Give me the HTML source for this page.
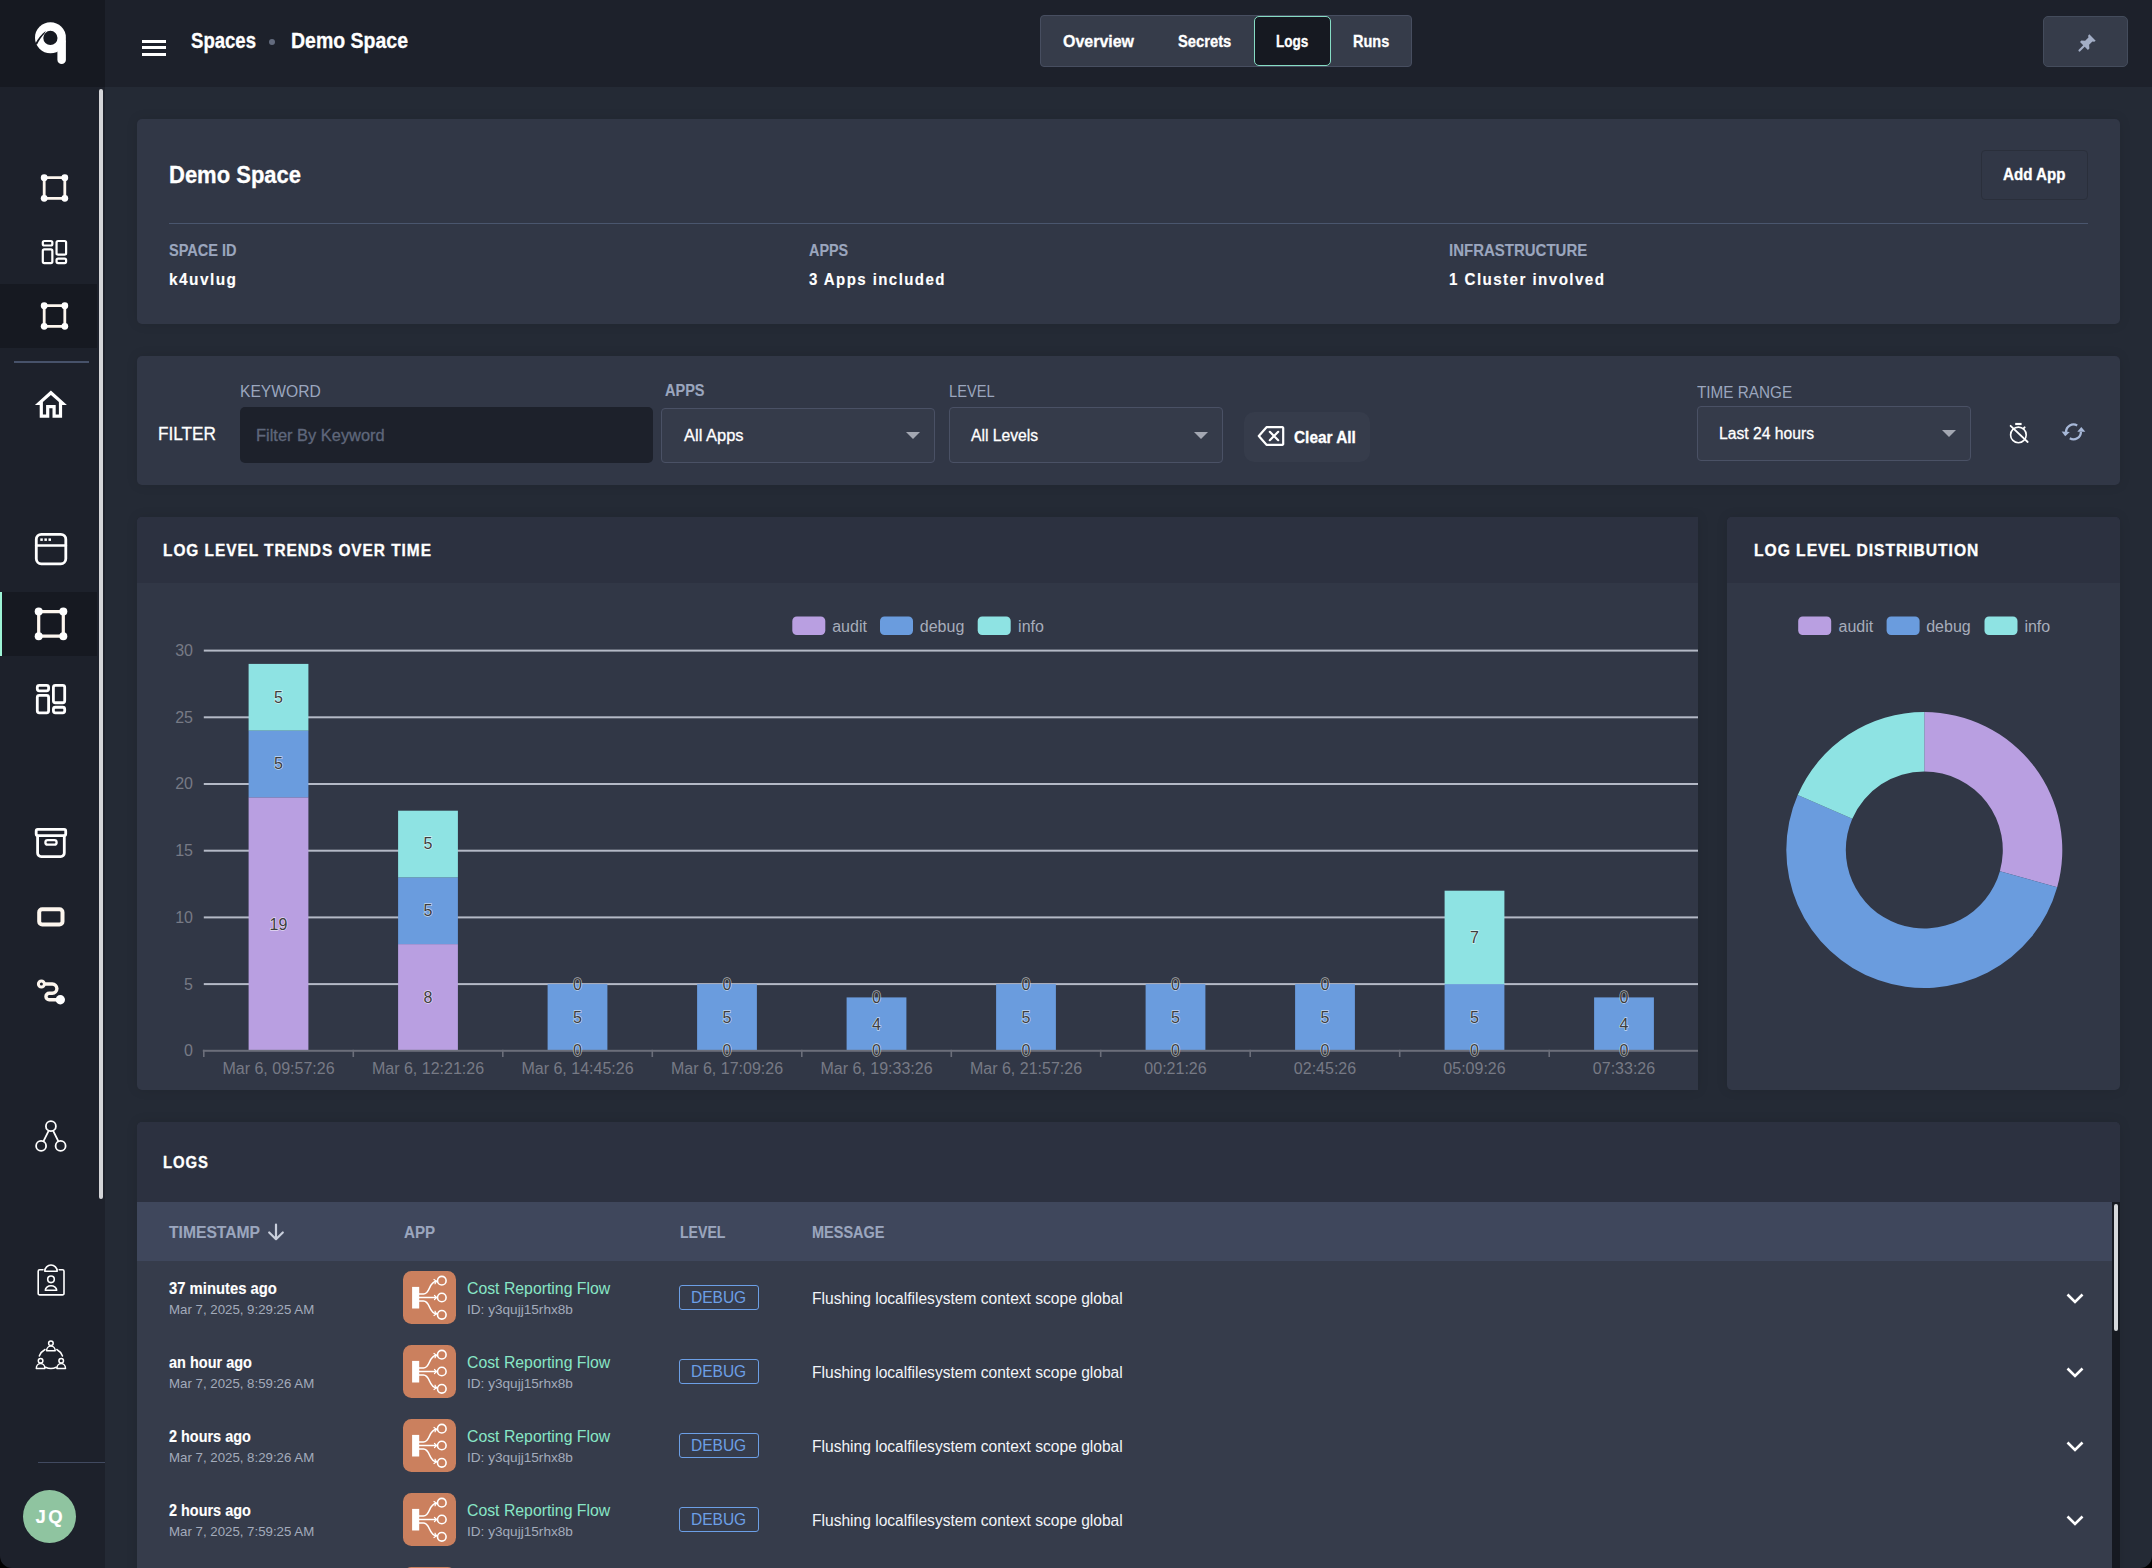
<!DOCTYPE html>
<html lang="en">
<head>
<meta charset="utf-8">
<title>Spaces - Demo Space - Logs</title>
<style>
*{box-sizing:border-box;margin:0;padding:0}
html,body{width:2152px;height:1568px;overflow:hidden;background:#242a35}
body{font-family:"Liberation Sans",sans-serif;color:#fff;position:relative;-webkit-font-smoothing:antialiased}
.abs{position:absolute}
.t{position:absolute;white-space:nowrap;line-height:1;transform-origin:0 0;margin-top:1px}
.b{font-weight:700;-webkit-text-stroke-width:.12px}
.hv{-webkit-text-stroke-width:.3px}
.md{-webkit-text-stroke-width:.3px}
#topbar{position:absolute;left:0;top:0;width:2152px;height:87px;background:#1d212b}
#logo{position:absolute;left:0;top:0;width:105px;height:87px;background:#161921}
#side{position:absolute;left:0;top:87px;width:105px;height:1481px;background:#1d212b}
.panel{position:absolute;background:#313746;border-radius:5px;box-shadow:0 0 12px rgba(0,0,0,.10)}
.phead{position:absolute;left:0;top:0;right:0;background:#2c3140;border-radius:5px 5px 0 0}
.lbl{color:#9ba6be}
.sel{position:absolute;border:1px solid #4a5165;border-radius:4px;background:#353b4a}
.caret{position:absolute;width:0;height:0;border-left:7px solid transparent;border-right:7px solid transparent;border-top:7px solid #a3a7b2}
svg{position:absolute;overflow:visible}
.dl{fill:#3d3d3d;stroke:rgba(255,255,255,.62);stroke-width:1.300px;paint-order:stroke fill}
</style>
</head>
<body>
<!-- TOPBAR -->
<div id="topbar"></div>
<div id="logo"></div>
<div id="side"></div>
<!--SIDEBAR-ICONS-START-->
<div class="abs" style="left:0;top:284px;width:97px;height:64px;background:#161921"></div>
<div class="abs" style="left:0;top:592px;width:97px;height:64px;background:#161921"></div>
<div class="abs" style="left:0;top:592px;width:2px;height:64px;background:#9df5d6"></div>
<div class="abs" style="left:99px;top:89px;width:4px;height:1110px;background:#d4d5d8;border-radius:2px"></div>
<div class="abs" style="left:14px;top:361px;width:75px;height:2px;background:#47526a"></div>
<div class="abs" style="left:38px;top:1462px;width:67px;height:1px;background:#414a60"></div>
<div class="abs" style="left:23px;top:1490px;width:53px;height:53px;border-radius:50%;background:#8fc4a0"></div>
<div class="t b" id="av" style="left:35.500px;top:1506.500px;font-size:18.500px;letter-spacing:2.500px">JQ</div>
<svg style="left:0;top:0" width="105" height="1568" viewBox="0 0 105 1568" fill="none" stroke="#fff" stroke-linecap="round" stroke-linejoin="round">
<g stroke="none"><circle cx="50.450" cy="37.750" r="15.450" fill="#fff"/><rect x="57.400" y="37" width="8.500" height="27.100" rx="4.250" fill="#fff"/><circle cx="50.400" cy="37.900" r="7.100" fill="#161921"/><path d="M45.800 31C41.500 34 38 38.500 35.600 43L36.800 44.900C39 40.500 41.500 36.800 44.600 33.600Z" fill="#161921"/></g>
<rect x="44.2" y="177.7" width="20.6" height="20.6" stroke-width="2.8" stroke="#fdf6ee"/><circle cx="44.2" cy="177.7" r="3.4" fill="#fff" stroke="none"/><circle cx="64.8" cy="177.7" r="3.4" fill="#fff" stroke="none"/><circle cx="44.2" cy="198.3" r="3.4" fill="#fff" stroke="none"/><circle cx="64.8" cy="198.3" r="3.4" fill="#fff" stroke="none"/>
<rect x="44.2" y="305.7" width="20.6" height="20.6" stroke-width="2.8" stroke="#fdf6ee"/><circle cx="44.2" cy="305.7" r="3.4" fill="#fff" stroke="none"/><circle cx="64.8" cy="305.7" r="3.4" fill="#fff" stroke="none"/><circle cx="44.2" cy="326.3" r="3.4" fill="#fff" stroke="none"/><circle cx="64.8" cy="326.3" r="3.4" fill="#fff" stroke="none"/>
<rect x="38.7" y="611.6" width="24.6" height="24.6" stroke-width="3.2" stroke="#fdf6ee"/><circle cx="38.7" cy="611.6" r="4" fill="#fff" stroke="none"/><circle cx="63.3" cy="611.6" r="4" fill="#fff" stroke="none"/><circle cx="38.7" cy="636.2" r="4" fill="#fff" stroke="none"/><circle cx="63.3" cy="636.2" r="4" fill="#fff" stroke="none"/>
<rect x="42.80" y="241.00" width="9.55" height="4.48" rx="1.5" stroke-width="2.2"/><rect x="42.80" y="249.38" width="9.55" height="13.72" rx="1.5" stroke-width="2.2"/><rect x="56.55" y="241.00" width="9.55" height="13.72" rx="1.5" stroke-width="2.2"/><rect x="56.55" y="258.62" width="9.55" height="4.48" rx="1.5" stroke-width="2.2"/>
<rect x="37.30" y="685.30" width="11.30" height="5.53" rx="2" stroke-width="2.8"/><rect x="37.30" y="695.33" width="11.30" height="17.47" rx="2" stroke-width="2.8"/><rect x="53.40" y="685.30" width="11.30" height="17.47" rx="2" stroke-width="2.8"/><rect x="53.40" y="707.27" width="11.30" height="5.53" rx="2" stroke-width="2.8"/>
<path transform="translate(31.700,385.800) scale(1.600)" fill="#fff" stroke="none" d="M12 5.690l5 4.500V18h-2v-6H9v6H7v-7.810l5-4.500M12 3L2 12h3v8h6v-6h2v6h6v-8h3L12 3z"/>
<rect x="36.300" y="534.300" width="29.500" height="29.500" rx="5" stroke-width="2.800"/><path d="M36.300 545.500h29.500" stroke-width="2.600"/><g fill="#fff" stroke="none"><rect x="40.300" y="538.400" width="2.500" height="2.500"/><rect x="44.400" y="538.400" width="2.500" height="2.500"/><rect x="48.500" y="538.400" width="2.500" height="2.500"/></g>
<rect x="36.200" y="829.400" width="29.500" height="6.200" rx="1.500" stroke-width="2.800"/><path d="M37.600 836v17a3.600 3.600 0 0 0 3.600 3.600h19.500a3.600 3.600 0 0 0 3.600-3.600v-17" stroke-width="2.800"/><rect x="45.400" y="840.200" width="11.200" height="4.400" rx="2.200" stroke-width="2.300"/>
<rect x="39.200" y="909.200" width="23.300" height="15.300" rx="3" stroke-width="4" stroke="#fdf6ee"/>
<circle cx="41.400" cy="984" r="3" stroke-width="3" stroke="#fdf6ee"/><path d="M45.500 984h6.800a4.600 4.600 0 0 1 0 9.200h-3.100a3.250 3.250 0 0 0 0 6.500h9" stroke-width="3.400" stroke="#fdf6ee"/><circle cx="60.300" cy="999.700" r="4.700" fill="#fff" stroke="none"/>
<g stroke-width="1.800"><circle cx="50.900" cy="1126.200" r="5"/><circle cx="41.100" cy="1145.900" r="5"/><circle cx="60.600" cy="1145.900" r="5"/><path d="M48.600 1130.800l-5.200 10.500M53.200 1130.800l5.200 10.500"/></g>
<g stroke-width="1.600"><path d="M43 1269.800h-3.300a1.500 1.500 0 0 0-1.500 1.500v22.100a1.500 1.500 0 0 0 1.500 1.500h22.800a1.500 1.500 0 0 0 1.500-1.500v-22.100a1.500 1.500 0 0 0-1.500-1.500h-3.300"/><path d="M44.800 1271.200a6.200 6.200 0 0 1 12.400 0z"/><circle cx="51" cy="1279.300" r="3.300"/><path d="M45.300 1290.300a5.700 4.500 0 0 1 11.400 0z"/></g>
<g stroke-width="1.500"><circle cx="50.9" cy="1343.2" r="2.300"/><path d="M46.6 1350.8a4.300 4.800 0 0 1 8.600 0z"/><circle cx="40.6" cy="1360.8" r="2.300"/><path d="M36.3 1368.4a4.300 4.800 0 0 1 8.600 0z"/><circle cx="61.2" cy="1360.8" r="2.300"/><path d="M56.9 1368.4a4.300 4.800 0 0 1 8.600 0z"/><path d="M45 1349.500a12.500 12.500 0 0 0-5.700 6.500M56.800 1349.500a12.500 12.500 0 0 1 5.700 6.500M45.500 1367.200a12.500 12.500 0 0 0 10.800 0"/></g>
</svg>
<svg style="left:0;top:0" width="2152" height="1568" viewBox="0 0 2152 1568"><path d="M0 1568V1556A12 12 0 0 0 12 1568Z" fill="#000"/><path d="M2152 1568V1556A12 12 0 0 1 2140 1568Z" fill="#000"/></svg>
<!--SIDEBAR-ICONS-END-->

<!-- hamburger -->
<div class="abs" style="left:142px;top:40px;width:24px;height:3px;background:#fff"></div>
<div class="abs" style="left:142px;top:46px;width:24px;height:3px;background:#fff"></div>
<div class="abs" style="left:142px;top:53px;width:24px;height:3px;background:#fff"></div>
<div class="t b hv" id="bc1" style="left:191px;top:30.100px;font-size:21.300px;transform:scaleX(0.8714)">Spaces</div>
<div class="abs" style="left:269.200px;top:38.600px;width:6px;height:6px;border-radius:50%;background:#636b7e"></div>
<div class="t b hv" id="bc2" style="left:291px;top:30.100px;font-size:21.300px;transform:scaleX(0.9152)">Demo Space</div>
<!-- tabs -->
<div class="abs" style="left:1040px;top:15px;width:372px;height:52px;background:#363c4a;border:1px solid #474e60;border-radius:4px"></div>
<div class="abs" style="left:1254px;top:16px;width:77px;height:50px;background:#161921;border:1.500px solid #86dcc4;border-radius:5px"></div>
<div class="t b hv" id="tab1" style="left:1063px;top:32px;font-size:16.300px;transform:scaleX(0.9804)">Overview</div>
<div class="t b hv" id="tab2" style="left:1178px;top:32px;font-size:16.300px;transform:scaleX(0.9058)">Secrets</div>
<div class="t b hv" id="tab3" style="left:1276px;top:32px;font-size:16.300px;transform:scaleX(0.8331)">Logs</div>
<div class="t b hv" id="tab4" style="left:1353px;top:32px;font-size:16.300px;transform:scaleX(0.8894)">Runs</div>
<!-- pin -->
<div class="abs" style="left:2043px;top:16px;width:85px;height:51px;background:#363c4a;border:1px solid #444c5c;border-radius:5px"></div>
<svg style="left:2075.500px;top:32px" width="22" height="22" viewBox="0 0 24 24"><path fill="#a3aec6" d="M14.500 2.500l7 7-1.600 1.200-2-.4-3.600 3.600.3 4.200-1.600 1.400-8.600-8.600 1.400-1.600 4.200.3 3.600-3.600-.4-2z"/><path d="M9.500 14.500l-5.700 5.700" stroke="#a3aec6" stroke-width="2.300" stroke-linecap="round"/></svg>


<div class="panel" style="left:137px;top:119px;width:1983px;height:205px"></div>
<div class="t b hv" id="p1title" style="left:169px;top:162px;font-size:24px;transform:scaleX(0.9163)">Demo Space</div>
<div class="abs" style="left:1981px;top:150px;width:107px;height:50px;border:1px solid #2a2f3b;border-radius:4px"></div>
<div class="t b hv" id="addapp" style="left:2003px;top:164.500px;font-size:16.200px;transform:scaleX(0.9350)">Add App</div>
<div class="abs" style="left:169px;top:223px;width:1919px;height:1px;background:#4a566e"></div>
<div class="t b lbl" id="l1" style="left:169px;top:242px;font-size:16px;transform:scaleX(0.9087)">SPACE ID</div>
<div class="t b lbl" id="l2" style="left:809px;top:242px;font-size:16px;transform:scaleX(0.8995)">APPS</div>
<div class="t b lbl" id="l3" style="left:1449px;top:242px;font-size:16px;transform:scaleX(0.9367)">INFRASTRUCTURE</div>
<div class="t b" id="v1" style="left:169px;top:271px;font-size:16px;letter-spacing:1.5px;transform:scaleX(0.9645)">k4uvlug</div>
<div class="t b" id="v2" style="left:809px;top:271px;font-size:16px;letter-spacing:1.5px;transform:scaleX(0.9404)">3 Apps included</div>
<div class="t b" id="v3" style="left:1449px;top:271px;font-size:16px;letter-spacing:1.5px;transform:scaleX(0.9490)">1 Cluster involved</div>


<div class="panel" style="left:137px;top:356px;width:1983px;height:129px"></div>
<div class="t md" id="filt" style="left:158.3px;top:423px;font-size:19px;transform:scaleX(0.9040)">FILTER</div>
<div class="t lbl" id="fl1" style="left:240.4px;top:383px;font-size:16px;transform:scaleX(0.9774)">KEYWORD</div>
<div class="abs" style="left:240px;top:407px;width:413px;height:56px;background:#1d212b;border-radius:5px"></div>
<div class="t md" id="ph" style="left:256.3px;top:425.800px;font-size:16.400px;color:#5f677b;transform:scaleX(1.0020)">Filter By Keyword</div>
<div class="t b lbl" id="fl2" style="left:664.7px;top:382px;font-size:16px;transform:scaleX(0.9064)">APPS</div>
<div class="sel" style="left:661px;top:408px;width:274px;height:55px"></div>
<div class="t md" id="s1" style="left:683.6px;top:425.800px;font-size:16.400px;transform:scaleX(1.0062)">All Apps</div>
<div class="caret" style="left:906px;top:432px"></div>
<div class="t lbl" id="fl3" style="left:949px;top:383px;font-size:16px;transform:scaleX(0.9154)">LEVEL</div>
<div class="sel" style="left:949px;top:407px;width:274px;height:56px"></div>
<div class="t md" id="s2" style="left:971px;top:425.800px;font-size:16.400px;transform:scaleX(0.9579)">All Levels</div>
<div class="caret" style="left:1194px;top:432px"></div>
<div class="abs" style="left:1244px;top:412px;width:126px;height:50px;background:#363c4b;border-radius:10px"></div>
<svg style="left:1257px;top:425px" width="28" height="22" viewBox="0 0 28 22"><path d="M9.500 2.200H25.400a.8.8 0 0 1 .8.800v16a.8.8 0 0 1-.8.800H9.500L1.800 11z" fill="none" stroke="#fff" stroke-width="2.200" stroke-linejoin="round"/><path d="M12.800 6.800l8.400 8.400M21.200 6.800l-8.400 8.400" stroke="#fff" stroke-width="2.200" stroke-linecap="round"/></svg>
<div class="t b hv" id="clr" style="left:1294.4px;top:428px;font-size:16.500px;transform:scaleX(0.9330)">Clear All</div>
<div class="t lbl" id="fl4" style="left:1696.8px;top:384px;font-size:16px;transform:scaleX(0.9552)">TIME RANGE</div>
<div class="sel" style="left:1697px;top:406px;width:274px;height:55px"></div>
<div class="t md" id="s3" style="left:1718.9px;top:425px;font-size:16px;transform:scaleX(0.9809)">Last 24 hours</div>
<div class="caret" style="left:1942px;top:430px"></div>
<!-- timer-off icon -->
<svg style="left:0;top:0" width="1" height="1" fill="none" stroke="#fff" stroke-linecap="round"><circle cx="2018.400" cy="434.900" r="7.800" stroke-width="1.600"/><path d="M2015.200 424h6.400" stroke-width="2.200" stroke-linecap="butt"/><path d="M2023.600 428.400l1-1" stroke-width="2"/><path d="M2010.600 425.800L2027.700 442" stroke-width="1.800"/></svg>
<!-- refresh icon -->
<svg style="left:0;top:0" width="1" height="1" fill="none" stroke="#a7b8d8" stroke-width="2.300"><path d="M2066.100 431.900A7.400 7.400 0 0 1 2077.200 425.500"/><path d="M2080.900 431.900A7.400 7.400 0 0 1 2069.800 438.300"/><path d="M2061.600 431.500L2069.800 431.900L2065.200 436.300Z" fill="#a7b8d8" stroke="none"/><path d="M2081.300 427.100L2085.300 431.700L2077.300 431.700Z" fill="#a7b8d8" stroke="none"/></svg>

<!--CHART-START-->
<div class="panel" style="left:137px;top:517px;width:1561px;height:573px;border-radius:5px 0 0 5px"><div class="phead" style="height:66px;border-radius:5px 0 0 0"></div></div>
<div class="t b hv" id="ct1" style="left:163.1px;top:542px;font-size:16px;letter-spacing:1px;transform:scaleX(0.9635)">LOG LEVEL TRENDS OVER TIME</div>
<svg style="left:0;top:0" width="2152" height="1568" viewBox="0 0 2152 1568" font-family="Liberation Sans, sans-serif" font-size="16">
<rect x="792.3" y="616.5" width="33" height="18.500" rx="4.500" fill="#b99fe1"/>
<text x="832.2" y="631.7" fill="#a7adbb">audit</text>
<rect x="880" y="616.5" width="33" height="18.500" rx="4.500" fill="#6a9cde"/>
<text x="919.8" y="631.7" fill="#a7adbb">debug</text>
<rect x="977.7" y="616.5" width="33" height="18.500" rx="4.500" fill="#8ee3e3"/>
<text x="1018.1" y="631.7" fill="#a7adbb">info</text>
<rect x="203.8" y="983.1" width="1494.2" height="2" fill="#b4b9c6"/>
<rect x="203.8" y="916.4" width="1494.2" height="2" fill="#b4b9c6"/>
<rect x="203.8" y="849.7" width="1494.2" height="2" fill="#b4b9c6"/>
<rect x="203.8" y="783" width="1494.2" height="2" fill="#b4b9c6"/>
<rect x="203.8" y="716.3" width="1494.2" height="2" fill="#b4b9c6"/>
<rect x="203.8" y="649.6" width="1494.2" height="2" fill="#b4b9c6"/>
<text x="193" y="1056.2" text-anchor="end" fill="#777a85">0</text>
<text x="193" y="989.5" text-anchor="end" fill="#777a85">5</text>
<text x="193" y="922.8" text-anchor="end" fill="#777a85">10</text>
<text x="193" y="856.1" text-anchor="end" fill="#777a85">15</text>
<text x="193" y="789.4" text-anchor="end" fill="#777a85">20</text>
<text x="193" y="722.7" text-anchor="end" fill="#777a85">25</text>
<text x="193" y="656" text-anchor="end" fill="#777a85">30</text>
<rect x="248.6" y="797.3" width="59.8" height="253.5" fill="#b99fe1"/>
<rect x="248.6" y="730.6" width="59.8" height="66.7" fill="#6a9cde"/>
<rect x="248.6" y="663.9" width="59.8" height="66.7" fill="#8ee3e3"/>
<rect x="398.1" y="944.1" width="59.8" height="106.7" fill="#b99fe1"/>
<rect x="398.1" y="877.4" width="59.8" height="66.7" fill="#6a9cde"/>
<rect x="398.1" y="810.7" width="59.8" height="66.7" fill="#8ee3e3"/>
<rect x="547.6" y="984.1" width="59.8" height="66.7" fill="#6a9cde"/>
<rect x="697.1" y="984.1" width="59.8" height="66.7" fill="#6a9cde"/>
<rect x="846.6" y="997.4" width="59.8" height="53.4" fill="#6a9cde"/>
<rect x="996.1" y="984.1" width="59.8" height="66.7" fill="#6a9cde"/>
<rect x="1145.6" y="984.1" width="59.8" height="66.7" fill="#6a9cde"/>
<rect x="1295.1" y="984.1" width="59.8" height="66.7" fill="#6a9cde"/>
<rect x="1444.6" y="984.1" width="59.8" height="66.7" fill="#6a9cde"/>
<rect x="1444.6" y="890.7" width="59.8" height="93.4" fill="#8ee3e3"/>
<rect x="1594.1" y="997.4" width="59.8" height="53.4" fill="#6a9cde"/>
<rect x="202.8" y="1049.8" width="1495.2" height="2" fill="#6b6e7a"/>
<rect x="203.0" y="1049.8" width="1.600" height="7.200" fill="#6b6e7a"/>
<rect x="352.5" y="1049.8" width="1.600" height="7.200" fill="#6b6e7a"/>
<rect x="502.0" y="1049.8" width="1.600" height="7.200" fill="#6b6e7a"/>
<rect x="651.5" y="1049.8" width="1.600" height="7.200" fill="#6b6e7a"/>
<rect x="801.0" y="1049.8" width="1.600" height="7.200" fill="#6b6e7a"/>
<rect x="950.5" y="1049.8" width="1.600" height="7.200" fill="#6b6e7a"/>
<rect x="1099.9" y="1049.8" width="1.600" height="7.200" fill="#6b6e7a"/>
<rect x="1249.4" y="1049.8" width="1.600" height="7.200" fill="#6b6e7a"/>
<rect x="1398.9" y="1049.8" width="1.600" height="7.200" fill="#6b6e7a"/>
<rect x="1548.4" y="1049.8" width="1.600" height="7.200" fill="#6b6e7a"/>
<text class="dl" x="278.5" y="929.5" text-anchor="middle">19</text>
<text class="dl" x="278.5" y="769.4" text-anchor="middle">5</text>
<text class="dl" x="278.5" y="702.7" text-anchor="middle">5</text>
<text class="dl" x="428.0" y="1002.8" text-anchor="middle">8</text>
<text class="dl" x="428.0" y="916.1" text-anchor="middle">5</text>
<text class="dl" x="428.0" y="849.4" text-anchor="middle">5</text>
<text class="dl" x="577.5" y="1056.2" text-anchor="middle">0</text>
<text class="dl" x="577.5" y="1022.8" text-anchor="middle">5</text>
<text class="dl" x="577.5" y="989.5" text-anchor="middle">0</text>
<text class="dl" x="727.0" y="1056.2" text-anchor="middle">0</text>
<text class="dl" x="727.0" y="1022.8" text-anchor="middle">5</text>
<text class="dl" x="727.0" y="989.5" text-anchor="middle">0</text>
<text class="dl" x="876.5" y="1056.2" text-anchor="middle">0</text>
<text class="dl" x="876.5" y="1029.5" text-anchor="middle">4</text>
<text class="dl" x="876.5" y="1002.8" text-anchor="middle">0</text>
<text class="dl" x="1026.0" y="1056.2" text-anchor="middle">0</text>
<text class="dl" x="1026.0" y="1022.8" text-anchor="middle">5</text>
<text class="dl" x="1026.0" y="989.5" text-anchor="middle">0</text>
<text class="dl" x="1175.5" y="1056.2" text-anchor="middle">0</text>
<text class="dl" x="1175.5" y="1022.8" text-anchor="middle">5</text>
<text class="dl" x="1175.5" y="989.5" text-anchor="middle">0</text>
<text class="dl" x="1325.0" y="1056.2" text-anchor="middle">0</text>
<text class="dl" x="1325.0" y="1022.8" text-anchor="middle">5</text>
<text class="dl" x="1325.0" y="989.5" text-anchor="middle">0</text>
<text class="dl" x="1474.5" y="1056.2" text-anchor="middle">0</text>
<text class="dl" x="1474.5" y="1022.8" text-anchor="middle">5</text>
<text class="dl" x="1474.5" y="942.8" text-anchor="middle">7</text>
<text class="dl" x="1624.0" y="1056.2" text-anchor="middle">0</text>
<text class="dl" x="1624.0" y="1029.5" text-anchor="middle">4</text>
<text class="dl" x="1624.0" y="1002.8" text-anchor="middle">0</text>
<text x="278.5" y="1074.4" text-anchor="middle" fill="#777a85">Mar 6, 09:57:26</text>
<text x="428.0" y="1074.4" text-anchor="middle" fill="#777a85">Mar 6, 12:21:26</text>
<text x="577.5" y="1074.4" text-anchor="middle" fill="#777a85">Mar 6, 14:45:26</text>
<text x="727.0" y="1074.4" text-anchor="middle" fill="#777a85">Mar 6, 17:09:26</text>
<text x="876.5" y="1074.4" text-anchor="middle" fill="#777a85">Mar 6, 19:33:26</text>
<text x="1026.0" y="1074.4" text-anchor="middle" fill="#777a85">Mar 6, 21:57:26</text>
<text x="1175.5" y="1074.4" text-anchor="middle" fill="#777a85">00:21:26</text>
<text x="1325.0" y="1074.4" text-anchor="middle" fill="#777a85">02:45:26</text>
<text x="1474.5" y="1074.4" text-anchor="middle" fill="#777a85">05:09:26</text>
<text x="1624.0" y="1074.4" text-anchor="middle" fill="#777a85">07:33:26</text>
</svg>
<!--CHART-END-->
<!--DONUT-START-->
<div class="panel" style="left:1727px;top:517px;width:393px;height:573px"><div class="phead" style="height:66px"></div></div>
<div class="t b hv" id="ct2" style="left:1754.2px;top:542px;font-size:16px;letter-spacing:1px;transform:scaleX(0.9769)">LOG LEVEL DISTRIBUTION</div>
<svg style="left:0;top:0" width="2152" height="1568" viewBox="0 0 2152 1568" font-family="Liberation Sans, sans-serif" font-size="16">
<rect x="1798.2" y="616.5" width="33" height="18.500" rx="4.500" fill="#b99fe1"/>
<text x="1838.5" y="631.7" fill="#a7adbb">audit</text>
<rect x="1886.6" y="616.5" width="33" height="18.500" rx="4.500" fill="#6a9cde"/>
<text x="1926.2" y="631.7" fill="#a7adbb">debug</text>
<rect x="1984.5" y="616.5" width="33" height="18.500" rx="4.500" fill="#8ee3e3"/>
<text x="2024.4" y="631.7" fill="#a7adbb">info</text>
<path fill="#b99fe1" d="M1924.30 712.00A138 138 0 0 1 2057.18 887.23L1999.89 871.18A78.5 78.5 0 0 0 1924.30 771.50Z"/>
<path fill="#6a9cde" d="M2057.18 887.23A138 138 0 1 1 1797.72 795.02L1852.30 818.73A78.5 78.5 0 1 0 1999.89 871.18Z"/>
<path fill="#8ee3e3" d="M1797.72 795.02A138 138 0 0 1 1924.30 712.00L1924.30 771.50A78.5 78.5 0 0 0 1852.30 818.73Z"/>
</svg>
<!--DONUT-END-->
<!--LOGS-START-->
<div class="panel" style="left:137px;top:1122px;width:1983px;height:460px;overflow:hidden"><div class="phead" style="height:80px"></div><div class="abs" style="left:0;top:80px;width:1975px;height:59px;background:#3f475c"></div><div class="abs" style="left:0;top:139px;width:1975px;height:330px;background:#363c4b"></div><div class="abs" style="left:1975px;top:80px;width:8px;height:400px;background:#161921"></div><div class="abs" style="left:1977px;top:82px;width:4px;height:127px;background:#d5d7db;border-radius:2px"></div></div>
<div class="t b hv" id="lg0" style="left:163.2px;top:1154px;font-size:16px;letter-spacing:1px;transform:scaleX(0.9308)">LOGS</div>
<div class="t b lbl" id="h1" style="left:168.8px;top:1224px;font-size:16px;transform:scaleX(0.9782)">TIMESTAMP</div>
<div class="t b lbl" id="h2" style="left:403.5px;top:1224px;font-size:16px;transform:scaleX(0.9451)">APP</div>
<div class="t b lbl" id="h3" style="left:679.5px;top:1224px;font-size:16px;transform:scaleX(0.8824)">LEVEL</div>
<div class="t b lbl" id="h4" style="left:811.9px;top:1224px;font-size:16px;transform:scaleX(0.9061)">MESSAGE</div>
<svg style="left:267px;top:1223px" width="18" height="18" viewBox="0 0 18 18" fill="none" stroke="#c9cfdc" stroke-width="2.200" stroke-linecap="round" stroke-linejoin="round"><path d="M9 1.500v14.500M2.200 9.500L9 16.200l6.800-6.700"/></svg>
<div class="t b" id="r0a" style="left:168.8px;top:1279.5px;font-size:16px;transform:scaleX(0.9263)">37 minutes ago</div>
<div class="t" id="r0b" style="left:168.8px;top:1301.6px;font-size:13.300px;color:#a3abbb;transform:scaleX(0.9971)">Mar 7, 2025, 9:29:25 AM</div>
<svg style="left:403px;top:1271px" width="53" height="53" viewBox="0 0 53 53"><rect width="53" height="53" rx="8.500" fill="#cb805e"/><rect x="9.100" y="15.900" width="7.100" height="21.600" fill="#fff"/><g fill="none" stroke="#fff" stroke-width="1.600" stroke-linecap="round" stroke-linejoin="round"><path d="M16 26.500h17.500"/><path d="M16 23h4.500c7 0 5-12.500 13-12.800"/><path d="M16 30h4.500c7 0 5 12.500 13 12.800"/><path d="M31.500 24.500l2 2-2 2M31 8.500l2.500 1.700-1.500 2.600M31 44.500l2.500-1.700-1.500-2.600" stroke-width="1.200"/><circle cx="38.800" cy="9.700" r="4.300"/><circle cx="38.800" cy="26.500" r="4.300"/><circle cx="38.800" cy="43.800" r="4.300"/></g></svg>
<div class="t" id="r0c" style="left:466.8px;top:1280px;font-size:16px;color:#88e6c6;transform:scaleX(0.9879)">Cost Reporting Flow</div>
<div class="t" id="r0d" style="left:466.8px;top:1301.6px;font-size:13.300px;color:#a3abbb;transform:scaleX(1.0233)">ID: y3qujj15rhx8b</div>
<div class="abs" style="left:679px;top:1285px;width:80px;height:25px;border:1.500px solid #6c9fe6;border-radius:3px"></div>
<div class="t" id="r0e" style="left:691.2px;top:1288.8px;font-size:16px;color:#6c9fe6;transform:scaleX(0.9700)">DEBUG</div>
<div class="t" id="r0f" style="left:811.9px;top:1290px;font-size:16px;color:#f2f4f8;transform:scaleX(0.9731)">Flushing localfilesystem context scope global</div>
<svg style="left:2066px;top:1292.5px" width="18" height="12" viewBox="0 0 18 12" fill="none" stroke="#fff" stroke-width="2.600" stroke-linecap="butt" stroke-linejoin="miter"><path d="M1.500 1.500L9 9l7.500-7.500"/></svg>
<div class="t b" id="r1a" style="left:168.8px;top:1353.6px;font-size:16px;transform:scaleX(0.9054)">an hour ago</div>
<div class="t" id="r1b" style="left:168.8px;top:1375.7px;font-size:13.300px;color:#a3abbb;transform:scaleX(0.9971)">Mar 7, 2025, 8:59:26 AM</div>
<svg style="left:403px;top:1345.1px" width="53" height="53" viewBox="0 0 53 53"><rect width="53" height="53" rx="8.500" fill="#cb805e"/><rect x="9.100" y="15.900" width="7.100" height="21.600" fill="#fff"/><g fill="none" stroke="#fff" stroke-width="1.600" stroke-linecap="round" stroke-linejoin="round"><path d="M16 26.500h17.500"/><path d="M16 23h4.500c7 0 5-12.500 13-12.800"/><path d="M16 30h4.500c7 0 5 12.500 13 12.800"/><path d="M31.500 24.500l2 2-2 2M31 8.500l2.500 1.700-1.500 2.600M31 44.500l2.500-1.700-1.500-2.600" stroke-width="1.200"/><circle cx="38.800" cy="9.700" r="4.300"/><circle cx="38.800" cy="26.500" r="4.300"/><circle cx="38.800" cy="43.800" r="4.300"/></g></svg>
<div class="t" id="r1c" style="left:466.8px;top:1354.1px;font-size:16px;color:#88e6c6;transform:scaleX(0.9879)">Cost Reporting Flow</div>
<div class="t" id="r1d" style="left:466.8px;top:1375.7px;font-size:13.300px;color:#a3abbb;transform:scaleX(1.0233)">ID: y3qujj15rhx8b</div>
<div class="abs" style="left:679px;top:1359.1px;width:80px;height:25px;border:1.500px solid #6c9fe6;border-radius:3px"></div>
<div class="t" id="r1e" style="left:691.2px;top:1362.9px;font-size:16px;color:#6c9fe6;transform:scaleX(0.9700)">DEBUG</div>
<div class="t" id="r1f" style="left:811.9px;top:1364.1px;font-size:16px;color:#f2f4f8;transform:scaleX(0.9731)">Flushing localfilesystem context scope global</div>
<svg style="left:2066px;top:1366.6px" width="18" height="12" viewBox="0 0 18 12" fill="none" stroke="#fff" stroke-width="2.600" stroke-linecap="butt" stroke-linejoin="miter"><path d="M1.500 1.500L9 9l7.500-7.500"/></svg>
<div class="t b" id="r2a" style="left:168.8px;top:1427.7px;font-size:16px;transform:scaleX(0.9020)">2 hours ago</div>
<div class="t" id="r2b" style="left:168.8px;top:1449.8px;font-size:13.300px;color:#a3abbb;transform:scaleX(0.9971)">Mar 7, 2025, 8:29:26 AM</div>
<svg style="left:403px;top:1419.2px" width="53" height="53" viewBox="0 0 53 53"><rect width="53" height="53" rx="8.500" fill="#cb805e"/><rect x="9.100" y="15.900" width="7.100" height="21.600" fill="#fff"/><g fill="none" stroke="#fff" stroke-width="1.600" stroke-linecap="round" stroke-linejoin="round"><path d="M16 26.500h17.500"/><path d="M16 23h4.500c7 0 5-12.500 13-12.800"/><path d="M16 30h4.500c7 0 5 12.500 13 12.800"/><path d="M31.500 24.500l2 2-2 2M31 8.500l2.500 1.700-1.500 2.600M31 44.500l2.500-1.700-1.500-2.600" stroke-width="1.200"/><circle cx="38.800" cy="9.700" r="4.300"/><circle cx="38.800" cy="26.500" r="4.300"/><circle cx="38.800" cy="43.800" r="4.300"/></g></svg>
<div class="t" id="r2c" style="left:466.8px;top:1428.2px;font-size:16px;color:#88e6c6;transform:scaleX(0.9879)">Cost Reporting Flow</div>
<div class="t" id="r2d" style="left:466.8px;top:1449.8px;font-size:13.300px;color:#a3abbb;transform:scaleX(1.0233)">ID: y3qujj15rhx8b</div>
<div class="abs" style="left:679px;top:1433.2px;width:80px;height:25px;border:1.500px solid #6c9fe6;border-radius:3px"></div>
<div class="t" id="r2e" style="left:691.2px;top:1437px;font-size:16px;color:#6c9fe6;transform:scaleX(0.9700)">DEBUG</div>
<div class="t" id="r2f" style="left:811.9px;top:1438.2px;font-size:16px;color:#f2f4f8;transform:scaleX(0.9731)">Flushing localfilesystem context scope global</div>
<svg style="left:2066px;top:1440.7px" width="18" height="12" viewBox="0 0 18 12" fill="none" stroke="#fff" stroke-width="2.600" stroke-linecap="butt" stroke-linejoin="miter"><path d="M1.500 1.500L9 9l7.500-7.500"/></svg>
<div class="t b" id="r3a" style="left:168.8px;top:1501.8px;font-size:16px;transform:scaleX(0.9020)">2 hours ago</div>
<div class="t" id="r3b" style="left:168.8px;top:1523.9px;font-size:13.300px;color:#a3abbb;transform:scaleX(0.9971)">Mar 7, 2025, 7:59:25 AM</div>
<svg style="left:403px;top:1493.3px" width="53" height="53" viewBox="0 0 53 53"><rect width="53" height="53" rx="8.500" fill="#cb805e"/><rect x="9.100" y="15.900" width="7.100" height="21.600" fill="#fff"/><g fill="none" stroke="#fff" stroke-width="1.600" stroke-linecap="round" stroke-linejoin="round"><path d="M16 26.500h17.500"/><path d="M16 23h4.500c7 0 5-12.500 13-12.800"/><path d="M16 30h4.500c7 0 5 12.500 13 12.800"/><path d="M31.500 24.500l2 2-2 2M31 8.500l2.500 1.700-1.500 2.600M31 44.500l2.500-1.700-1.500-2.600" stroke-width="1.200"/><circle cx="38.800" cy="9.700" r="4.300"/><circle cx="38.800" cy="26.500" r="4.300"/><circle cx="38.800" cy="43.800" r="4.300"/></g></svg>
<div class="t" id="r3c" style="left:466.8px;top:1502.3px;font-size:16px;color:#88e6c6;transform:scaleX(0.9879)">Cost Reporting Flow</div>
<div class="t" id="r3d" style="left:466.8px;top:1523.9px;font-size:13.300px;color:#a3abbb;transform:scaleX(1.0233)">ID: y3qujj15rhx8b</div>
<div class="abs" style="left:679px;top:1507.3px;width:80px;height:25px;border:1.500px solid #6c9fe6;border-radius:3px"></div>
<div class="t" id="r3e" style="left:691.2px;top:1511.1px;font-size:16px;color:#6c9fe6;transform:scaleX(0.9700)">DEBUG</div>
<div class="t" id="r3f" style="left:811.9px;top:1512.3px;font-size:16px;color:#f2f4f8;transform:scaleX(0.9731)">Flushing localfilesystem context scope global</div>
<svg style="left:2066px;top:1514.8px" width="18" height="12" viewBox="0 0 18 12" fill="none" stroke="#fff" stroke-width="2.600" stroke-linecap="butt" stroke-linejoin="miter"><path d="M1.500 1.500L9 9l7.500-7.500"/></svg>
<svg style="left:403px;top:1567.4px" width="53" height="53" viewBox="0 0 53 53"><rect width="53" height="53" rx="8.500" fill="#cb805e"/><rect x="9.100" y="15.900" width="7.100" height="21.600" fill="#fff"/><g fill="none" stroke="#fff" stroke-width="1.600" stroke-linecap="round" stroke-linejoin="round"><path d="M16 26.500h17.500"/><path d="M16 23h4.500c7 0 5-12.500 13-12.800"/><path d="M16 30h4.500c7 0 5 12.500 13 12.800"/><path d="M31.500 24.500l2 2-2 2M31 8.500l2.500 1.700-1.500 2.600M31 44.500l2.500-1.700-1.500-2.600" stroke-width="1.200"/><circle cx="38.800" cy="9.700" r="4.300"/><circle cx="38.800" cy="26.500" r="4.300"/><circle cx="38.800" cy="43.800" r="4.300"/></g></svg>
<!--LOGS-END-->
</body>
</html>
